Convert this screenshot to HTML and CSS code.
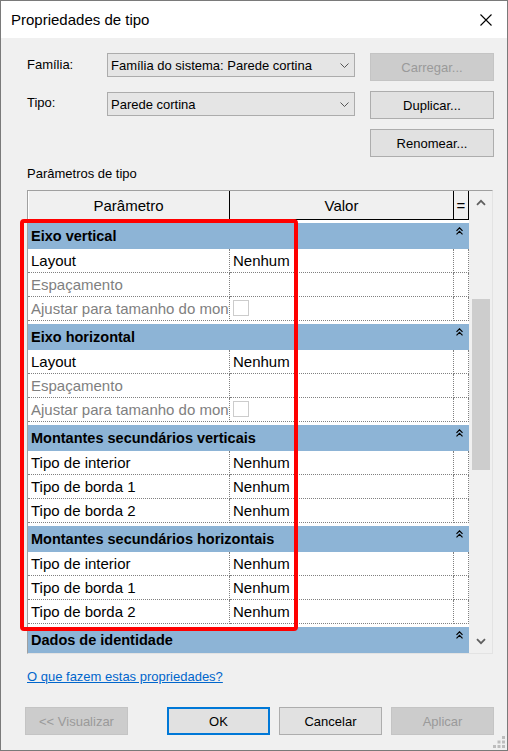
FILE: index.html
```html
<!DOCTYPE html>
<html lang="pt">
<head>
<meta charset="utf-8">
<title>Propriedades de tipo</title>
<link rel="stylesheet" href="styles.css">
</head>
<body>
<div class="dialog">
  <div class="titlebar">
    <span class="title">Propriedades de tipo</span>
    <svg class="close" width="12" height="12" viewBox="0 0 12 12"><path d="M0.5 0.5 L11.5 11.5 M11.5 0.5 L0.5 11.5" stroke="#000" stroke-width="1.1" fill="none"/></svg>
  </div>
  <div class="content">
    <div class="form">
      <div class="lbl">Família:</div>
      <div class="combo"><span>Família do sistema: Parede cortina</span><svg width="9" height="5" viewBox="0 0 9 5"><path d="M0.5 0.5 L4.5 4.5 L8.5 0.5" stroke="#555" fill="none"/></svg></div>
      <button class="btn disabled">Carregar...</button>
      <div class="lbl">Tipo:</div>
      <div class="combo second"><span>Parede cortina</span><svg width="9" height="5" viewBox="0 0 9 5"><path d="M0.5 0.5 L4.5 4.5 L8.5 0.5" stroke="#555" fill="none"/></svg></div>
      <button class="btn">Duplicar...</button>
      <button class="btn col3">Renomear...</button>
    </div>
    <div class="section-label">Parâmetros de tipo</div>
    <div class="table">
      <div class="grid">
        <div class="thead">
          <div class="th c1">Parâmetro</div>
          <div class="th c2">Valor</div>
          <div class="th c3">=</div>
        </div>
        <div class="group"><span>Eixo vertical</span><svg class="collapse" width="7" height="8" viewBox="0 0 7 8"><path d="M0.5 3.8 L3.5 0.8 L6.5 3.8 M0.5 7.3 L3.5 4.3 L6.5 7.3" stroke="#000" stroke-width="1.2" fill="none"/></svg></div>
        <div class="row"><div class="cell c1">Layout</div><div class="cell c2">Nenhum</div><div class="cell c3"></div></div>
        <div class="row off"><div class="cell c1">Espaçamento</div><div class="cell c2"></div><div class="cell c3"></div></div>
        <div class="row off"><div class="cell c1">Ajustar para tamanho do montante</div><div class="cell c2"><span class="check"></span></div><div class="cell c3"></div></div>
        <div class="group"><span>Eixo horizontal</span><svg class="collapse" width="7" height="8" viewBox="0 0 7 8"><path d="M0.5 3.8 L3.5 0.8 L6.5 3.8 M0.5 7.3 L3.5 4.3 L6.5 7.3" stroke="#000" stroke-width="1.2" fill="none"/></svg></div>
        <div class="row"><div class="cell c1">Layout</div><div class="cell c2">Nenhum</div><div class="cell c3"></div></div>
        <div class="row off"><div class="cell c1">Espaçamento</div><div class="cell c2"></div><div class="cell c3"></div></div>
        <div class="row off"><div class="cell c1">Ajustar para tamanho do montante</div><div class="cell c2"><span class="check"></span></div><div class="cell c3"></div></div>
        <div class="group"><span>Montantes secundários verticais</span><svg class="collapse" width="7" height="8" viewBox="0 0 7 8"><path d="M0.5 3.8 L3.5 0.8 L6.5 3.8 M0.5 7.3 L3.5 4.3 L6.5 7.3" stroke="#000" stroke-width="1.2" fill="none"/></svg></div>
        <div class="row"><div class="cell c1">Tipo de interior</div><div class="cell c2">Nenhum</div><div class="cell c3"></div></div>
        <div class="row"><div class="cell c1">Tipo de borda 1</div><div class="cell c2">Nenhum</div><div class="cell c3"></div></div>
        <div class="row"><div class="cell c1">Tipo de borda 2</div><div class="cell c2">Nenhum</div><div class="cell c3"></div></div>
        <div class="group"><span>Montantes secundários horizontais</span><svg class="collapse" width="7" height="8" viewBox="0 0 7 8"><path d="M0.5 3.8 L3.5 0.8 L6.5 3.8 M0.5 7.3 L3.5 4.3 L6.5 7.3" stroke="#000" stroke-width="1.2" fill="none"/></svg></div>
        <div class="row"><div class="cell c1">Tipo de interior</div><div class="cell c2">Nenhum</div><div class="cell c3"></div></div>
        <div class="row"><div class="cell c1">Tipo de borda 1</div><div class="cell c2">Nenhum</div><div class="cell c3"></div></div>
        <div class="row"><div class="cell c1">Tipo de borda 2</div><div class="cell c2">Nenhum</div><div class="cell c3"></div></div>
        <div class="group"><span>Dados de identidade</span><svg class="collapse" width="7" height="8" viewBox="0 0 7 8"><path d="M0.5 3.8 L3.5 0.8 L6.5 3.8 M0.5 7.3 L3.5 4.3 L6.5 7.3" stroke="#000" stroke-width="1.2" fill="none"/></svg></div>
      </div>
      <div class="scrollbar">
        <div class="sb-btn"><svg width="10" height="7" viewBox="0 0 10 7"><path d="M1 5.8 L5 1.8 L9 5.8" stroke="#606060" stroke-width="1.8" fill="none"/></svg></div>
        <div class="sb-track"><div class="sb-thumb"></div></div>
        <div class="sb-btn"><svg width="10" height="7" viewBox="0 0 10 7"><path d="M1 1.2 L5 5.2 L9 1.2" stroke="#606060" stroke-width="1.8" fill="none"/></svg></div>
      </div>
      <div class="highlight"></div>
    </div>
    <a class="help" href="#">O que fazem estas propriedades?</a>
    <div class="buttons">
      <button class="btn disabled preview">&lt;&lt; Visualizar</button>
      <button class="btn default">OK</button>
      <button class="btn">Cancelar</button>
      <button class="btn disabled">Aplicar</button>
    </div>
  </div>
  <svg class="grip" width="12" height="12" viewBox="0 0 12 12"><g fill="#bdbdbd"><rect x="9" y="0" width="3" height="3"/><rect x="4.5" y="4.5" width="3" height="3"/><rect x="9" y="4.5" width="3" height="3"/><rect x="0" y="9" width="3" height="3"/><rect x="4.5" y="9" width="3" height="3"/><rect x="9" y="9" width="3" height="3"/></g></svg>
</div>
</body>
</html>
```
FILE: styles.css
```css
* { box-sizing: border-box; }
html, body { margin: 0; padding: 0; }
body {
  width: 508px;
  height: 751px;
  overflow: hidden;
  background: #f0f0f0;
  font-family: "Liberation Sans", Arial, sans-serif;
  color: #000;
}
.dialog {
  position: relative;
  width: 508px;
  height: 751px;
  border: 1px solid #7a7a7a;
  background: #f0f0f0;
  display: flex;
  flex-direction: column;
}
.titlebar {
  height: 37px;
  background: #fff;
  display: flex;
  align-items: center;
  justify-content: space-between;
  padding: 0 15px 0 10px;
  flex: none;
}
.title { font-size: 15px; }
.close { display: block; }

.content {
  padding: 15px 13px 0 26px;
  display: flex;
  flex-direction: column;
}
.form {
  display: grid;
  grid-template-columns: 65px 248px 124px;
  grid-template-rows: 28px 28px 28px;
  column-gap: 15px;
  row-gap: 10px;
}
.lbl {
  font-size: 13px;
  line-height: 24px;
  align-self: start;
}
.combo {
  align-self: start;
  height: 24px;
  border: 1px solid #acacac;
  background: #e5e5e5;
  display: flex;
  align-items: center;
  justify-content: space-between;
  padding: 0 5px 0 3px;
  font-size: 13px;
}
.combo.second { margin-top: 1px; }
.combo svg { display: block; }
.col3 { grid-column: 3; }
.btn {
  height: 28px;
  border: 1px solid #adadad;
  background: #e1e1e1;
  font-family: "Liberation Sans", Arial, sans-serif;
  font-size: 13px;
  color: #000;
  padding: 0;
  margin: 0;
}
.btn.disabled {
  background: #cccccc;
  border-color: #c4c4c4;
  color: #9a9a9a;
}
.btn.default { border: 2px solid #0078d7; }

.section-label {
  font-size: 13px;
  line-height: 16px;
  margin-top: 9px;
  margin-bottom: 8px;
}

.table {
  position: relative;
  width: 466px;
  height: 464px;
  border-top: 1px solid #a0a0a0;
  border-left: 1px solid #a0a0a0;
  border-right: 1px solid #e3e3e3;
  border-bottom: 1px solid #e3e3e3;
  display: flex;
}
.grid {
  width: 441px;
  height: 462px;
  overflow: hidden;
  background: #fff;
  flex: none;
}
.thead {
  display: flex;
  height: 29px;
  border-bottom: 1px solid #000;
  background: #f0f0f0;
  box-shadow: inset 1px 0 #fff;
}
.th {
  font-size: 15px;
  display: flex;
  align-items: center;
  justify-content: center;
  border-right: 1px solid #000;
}
.c1 { width: 202px; flex: none; }
.c2 { width: 224px; flex: none; }
.c3 { width: 15px; flex: none; }

.group {
  margin-top: 3px;
  height: 26px;
  background: #8db4d6;
  display: flex;
  justify-content: space-between;
  padding: 0 6px 0 3px;
  font-weight: bold;
  font-size: 14.5px;
  line-height: 26px;
  white-space: nowrap;
}
.collapse { margin-top: 4px; display: block; }

.row {
  display: flex;
  height: 24px;
}
.cell {
  height: 24px;
  border-bottom: 1px dotted #808080;
  border-right: 1px dotted #808080;
  font-size: 15px;
  line-height: 23px;
  padding-left: 3px;
  white-space: nowrap;
  overflow: hidden;
}
.row.off .c1 { color: #7f7f7f; }
.check {
  display: block;
  width: 16px;
  height: 16px;
  margin-top: 3px;
  border: 1px solid #cccccc;
  background: #fff;
}

.scrollbar {
  flex: 1;
  display: flex;
  flex-direction: column;
  background: #f0f0f0;
}
.sb-btn {
  height: 23px;
  display: flex;
  align-items: center;
  justify-content: center;
  flex: none;
}
.sb-btn svg { display: block; }
.sb-track {
  flex: 1;
  padding: 85px 2px 0 3px;
}
.sb-thumb {
  height: 171px;
  background: #cdcdcd;
}

.highlight {
  position: absolute;
  left: -8px;
  top: 28px;
  width: 278px;
  height: 412px;
  border: 4px solid #ff0000;
  border-radius: 4px;
  pointer-events: none;
}

.help {
  margin-top: 15px;
  font-size: 13px;
  line-height: 16px;
  color: #0066cc;
  text-decoration: underline;
  align-self: flex-start;
}
.buttons {
  margin-top: 22px;
  margin-left: -2px;
  display: flex;
  gap: 9px;
}
.buttons .btn { width: 103px; }
.buttons .preview { margin-right: 30px; }

.grip {
  position: absolute;
  right: 2px;
  bottom: 2px;
  display: block;
}
```
